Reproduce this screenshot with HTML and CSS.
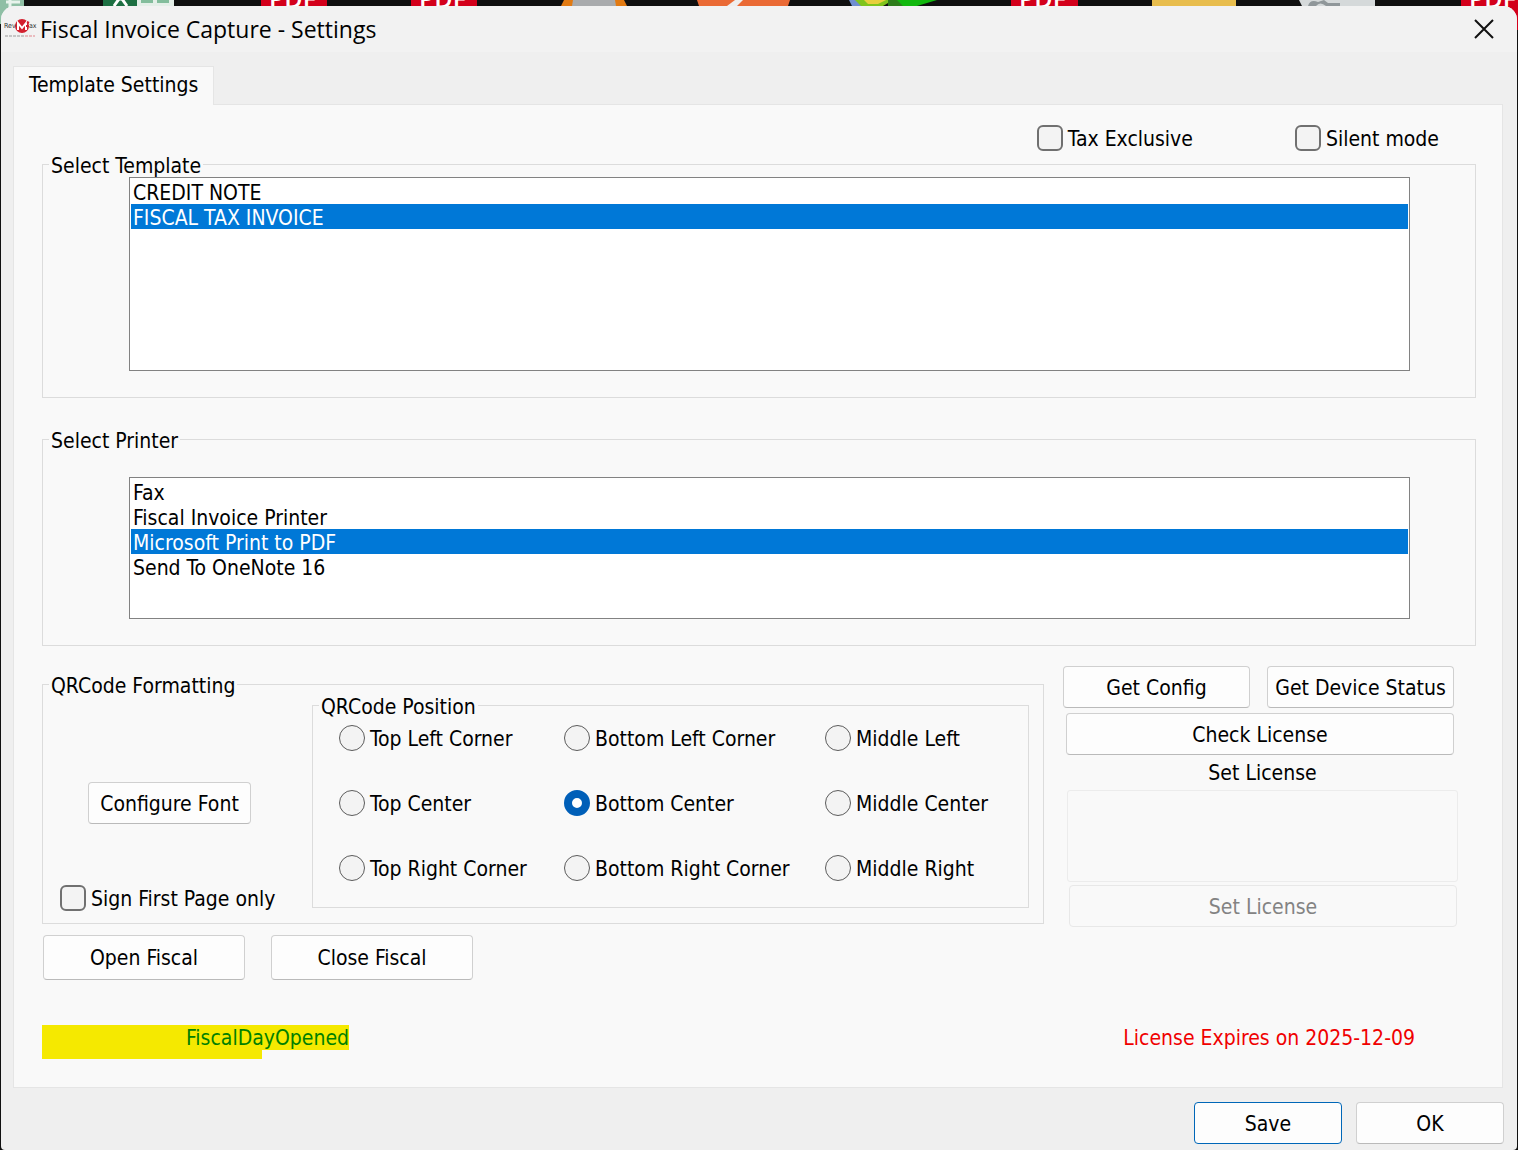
FILE: index.html
```html
<!DOCTYPE html>
<html lang="en">
  <head>
    <meta charset="utf-8">
    <title>Fiscal Invoice Capture - Settings</title>
    <link rel="stylesheet" href="styles.css">
  </head>
  <body>
    <!-- desktop icons peeking out behind the window -->
    <svg class="desktop" width="1518" height="36" aria-hidden="true">
      <rect x="0" width="24" height="24" fill="#8fbfa5"/>
      <path d="M6 2h14M10 0v8" stroke="#e8f3ec" stroke-width="3"/>
      <rect x="103" width="34" height="24" fill="#1d6f42"/>
      <path d="M114 6l5-7h3l5 7" fill="none" stroke="#fff" stroke-width="3"/>
      <rect x="137" width="37" height="24" fill="#e4efe8"/>
      <path d="M141 0h12v3h-12zM157 0h12v3h-12z" fill="#83bd9c"/>
      <g fill="#d3001b">
        <rect x="261" width="66" height="24"/>
        <rect x="411" width="66" height="24"/>
        <rect x="1011" width="67" height="24"/>
        <rect x="1461" width="57" height="30"/>
      </g>
      <g class="pdf">
        <text x="269" y="8">PDF</text>
        <text x="419" y="8">PDF</text>
        <text x="1019" y="8">PDF</text>
        <text x="1469" y="8">PDF</text>
      </g>
      <path d="M561 6l3-6h60l3 6z" fill="#e27a12"/>
      <path d="M572 6l1-6h42l1 6z" fill="#a9abad"/>
      <path d="M697 0h93l-2 6h-89z" fill="#ea6a35"/>
      <path d="M727 6l8-6h8l-6 6z" fill="#eee"/>
      <path d="M849 0h20v6h-17z" fill="#6f8ed0"/>
      <path d="M855 0h38l-10 6h-22z" fill="#7fc41c"/>
      <path d="M864 0h22l-8 4h-10z" fill="#e8cf3c"/>
      <path d="M888 0h10l8 6h-18z" fill="#2e7d1b"/>
      <path d="M897 0h40l-20 6h-14z" fill="#12b80e"/>
      <rect x="1152" width="84" height="6" fill="#e8bd4d"/>
      <path d="M1299 0h76v6h-73z" fill="#d5d9da"/>
      <path d="M1308 6q2-7 10-4l6-2 4 3 12 0v3h-14q-6-5-10 0z" fill="#90979a"/>
    </svg>

    <main class="window">
      <header class="titlebar">
        <svg class="logo" viewBox="0 0 34 22" aria-hidden="true">
          <circle cx="18" cy="8" r="7" fill="#d3202f"/>
          <path d="M14 12V5l4 5 4-5v7" fill="none" stroke="#fff" stroke-width="2"/>
          <path d="M23 4l2 1M22 8h3" stroke="#d3202f" stroke-width="2"/>
          <text x="0" y="10" class="logo-text">Rev</text>
          <text x="25" y="10" class="logo-text">ax</text>
          <path d="M1 18h19" stroke="#9a9a9a" stroke-dasharray="3 1"/>
          <path d="M21 18h10" stroke="#e2858c" stroke-dasharray="3 1"/>
        </svg>
        <h1 class="title">Fiscal Invoice Capture - Settings</h1>
        <button class="close" type="button" aria-label="Close">
          <svg width="20" height="20" viewBox="0 0 20 20"><path d="M1 1l18 18M19 1L1 19" stroke="#111" stroke-width="2"/></svg>
        </button>
      </header>

      <nav class="tabs">
        <button class="tab" type="button">Template Settings</button>
      </nav>

      <form class="panel" id="settings">
        <div class="modes">
          <label class="check"><input type="checkbox"><span>Tax Exclusive</span></label>
          <label class="check"><input type="checkbox"><span>Silent mode</span></label>
        </div>

        <fieldset class="group template">
          <legend>Select Template</legend>
          <div class="list-area">
            <select class="list" size="7" aria-label="Select Template">
              <option>CREDIT NOTE</option>
              <option selected>FISCAL TAX INVOICE</option>
            </select>
          </div>
        </fieldset>

        <fieldset class="group printer">
          <legend>Select Printer</legend>
          <div class="list-area">
            <select class="list" size="5" aria-label="Select Printer">
              <option>Fax</option>
              <option>Fiscal Invoice Printer</option>
              <option selected>Microsoft Print to PDF</option>
              <option>Send To OneNote 16</option>
            </select>
          </div>
        </fieldset>

        <div class="lower">
          <div class="qr-column">
            <fieldset class="group qr">
              <legend>QRCode Formatting</legend>
              <div class="qr-body">
                <div class="qr-side">
                  <button class="btn configure" type="button">Configure Font</button>
                  <label class="check"><input type="checkbox"><span>Sign First Page only</span></label>
                </div>
                <fieldset class="group position">
                  <legend>QRCode Position</legend>
                  <div class="radios">
                    <label class="radio"><input type="radio" name="pos"><span>Top Left Corner</span></label>
                    <label class="radio"><input type="radio" name="pos"><span>Bottom Left Corner</span></label>
                    <label class="radio"><input type="radio" name="pos"><span>Middle Left</span></label>
                    <label class="radio"><input type="radio" name="pos"><span>Top Center</span></label>
                    <label class="radio"><input type="radio" name="pos" checked><span>Bottom Center</span></label>
                    <label class="radio"><input type="radio" name="pos"><span>Middle Center</span></label>
                    <label class="radio"><input type="radio" name="pos"><span>Top Right Corner</span></label>
                    <label class="radio"><input type="radio" name="pos"><span>Bottom Right Corner</span></label>
                    <label class="radio"><input type="radio" name="pos"><span>Middle Right</span></label>
                  </div>
                </fieldset>
              </div>
            </fieldset>
            <div class="fiscal">
              <button class="btn" type="button">Open Fiscal</button>
              <button class="btn" type="button">Close Fiscal</button>
            </div>
          </div>

          <div class="license">
            <div class="device">
              <button class="btn" type="button">Get Config</button>
              <button class="btn" type="button">Get Device Status</button>
            </div>
            <button class="btn check-license" type="button">Check License</button>
            <label class="license-label" for="license">Set License</label>
            <textarea class="license-key" id="license" disabled></textarea>
            <button class="btn set-license" type="button" disabled>Set License</button>
          </div>
        </div>

        <div class="status">
          <div class="day-bar"></div>
          <span class="day">FiscalDayOpened</span>
          <span class="expires">License Expires on 2025-12-09</span>
        </div>
      </form>

      <footer class="actions">
        <button class="btn default" type="submit" form="settings">Save</button>
        <button class="btn" type="button">OK</button>
      </footer>
    </main>
  </body>
</html>
```
FILE: styles.css
```css
* {
  box-sizing: border-box;
}

body {
  margin: 0;
  padding: 6px 1px 0;
  min-height: 100vh;
  display: flex;
  background: #101010;
  color: #000;
  font-family: "DejaVu Sans Condensed", "Noto Sans", sans-serif;
  font-size: 21px;
  line-height: 25px;
}

button,
input,
select,
textarea {
  font: inherit;
  color: inherit;
  margin: 0;
}

.desktop {
  position: absolute;
  top: 0;
  left: 0;
  max-width: 100%;
}

.pdf {
  fill: #fff;
  font-family: "Open Sans", sans-serif;
  font-size: 25px;
  font-weight: 600;
}

.window {
  position: relative;
  flex: 1;
  min-width: 0;
  display: flex;
  flex-direction: column;
  background: #efefef;
  border-radius: 14px 14px 4px 4px;
  overflow: hidden;
}

.titlebar {
  display: flex;
  align-items: center;
  height: 46px;
  padding: 0 23px 0 3px;
  background: #f2f2f2;
}

.logo {
  width: 34px;
  height: 22px;
}

.logo-text {
  font-size: 7px;
  fill: #333;
}

.title {
  flex: 1;
  margin: 0 0 0 2px;
  font-family: "Open Sans", sans-serif;
  font-size: 23px;
  font-weight: normal;
}

.close {
  display: flex;
  padding: 0;
  border: 0;
  background: none;
}

.tabs {
  display: flex;
  padding: 14px 12px 0;
}

.tab {
  height: 39px;
  padding: 0 15px 2px;
  margin-bottom: -1px;
  border: 1px solid #e5e5e5;
  border-bottom: 0;
  background: #f9f9f9;
  z-index: 1;
}

.panel {
  flex: 1;
  margin: 0 14px 0 12px;
  padding: 19px 26px 28px 28px;
  border: 1px solid #e5e5e5;
  background: #f9f9f9;
}

.modes {
  display: flex;
  justify-content: flex-end;
  gap: 102px;
  height: 28px;
  padding-right: 37px;
}

.check,
.radio {
  display: flex;
  align-items: center;
  gap: 5px;
  height: 28px;
  white-space: nowrap;
}

.check span,
.radio span {
  padding-top: 2px;
}

.check input,
.radio input {
  appearance: none;
  width: 26px;
  height: 26px;
  border: 2px solid #707070;
  border-radius: 6px;
  background: #f3f3f3;
}

.radio input {
  border-width: 1px;
  border-color: #5c5c5c;
  border-radius: 50%;
}

.radio input:checked {
  border: 8px solid #005fb8;
  background: #fff;
}

.group {
  min-width: 0;
  margin: 0;
  padding: 0;
  border: 1px solid #dcdcdc;
}

.group > legend {
  margin-left: 6px;
  padding: 3px 2px 0;
  line-height: 22px;
}

.list-area {
  padding: 0 65px 26px 86px;
}

.printer {
  margin-top: 29px;
}

.printer .list-area {
  padding-top: 25px;
}

.list {
  display: block;
  width: 100%;
  height: 194px;
  padding: 1px;
  border: 1px solid #828282;
  border-radius: 0;
  background: #fff;
  outline: 0;
  overflow: hidden;
}

.printer .list {
  height: 142px;
}

.list option {
  height: 25px;
  min-height: 0;
  padding: 2px 2px 0;
  line-height: 23px;
}

.list option:checked {
  background: #0078d7 linear-gradient(#0078d7, #0078d7);
  color: #fff;
  -webkit-text-fill-color: #fff;
}

.lower {
  display: flex;
  gap: 19px;
  margin-top: 20px;
  padding-right: 18px;
}

.qr-column {
  flex: 1;
  min-width: 0;
}

.qr {
  margin-top: 6px;
}

.qr-body {
  display: flex;
  margin-top: -4px;
  padding: 0 14px 15px 0;
}

.qr-side {
  display: flex;
  flex-direction: column;
  align-items: flex-start;
  gap: 60px;
  width: 269px;
  margin-bottom: -10px;
  padding: 89px 0 0 17px;
}

.btn {
  height: 42px;
  padding: 2px 0 0;
  border: 1px solid #d0d0d0;
  border-bottom-color: #bababa;
  border-radius: 4px;
  background: #fdfdfd;
  white-space: nowrap;
}

.configure {
  width: 163px;
  margin-left: 28px;
}

.position {
  flex: 1;
}

.radios {
  display: grid;
  grid-template-columns: 225px 261px auto;
  row-gap: 39px;
  padding: 7px 0 26px 26px;
}

.radio {
  height: 26px;
}

.fiscal {
  display: flex;
  gap: 26px;
  margin: 11px 0 0 1px;
}

.fiscal .btn {
  width: 202px;
  height: 45px;
}

.license {
  display: flex;
  flex-direction: column;
  width: 395px;
}

.device {
  display: grid;
  grid-template-columns: 1fr 1fr;
  gap: 17px;
  margin-right: 4px;
}

.check-license {
  margin: 5px 4px 0 3px;
}

.license-label {
  margin: 6px 0 4px 4px;
  text-align: center;
}

.license-key {
  height: 92px;
  margin-left: 4px;
  border: 1px solid #ececec;
  border-radius: 3px;
  background: #f9f9f9;
  resize: none;
}

.set-license {
  margin: 3px 1px 0 6px;
}

.btn:disabled {
  border-color: #e8e8e8;
  background: #f9f9f9;
  color: #838383;
}

.status {
  display: flex;
  align-items: flex-start;
  margin-top: 45px;
}

.day-bar {
  width: 220px;
  height: 34px;
  background: #f5e900;
}

/* the label runs over the end of the bar */
.day {
  margin-left: -76px;
  padding-top: 2px;
  line-height: 23px;
  background: #f5e900;
  color: #008000;
}

.expires {
  margin: 0 61px 0 auto;
  padding-top: 2px;
  line-height: 23px;
  color: #f00000;
}

.actions {
  display: flex;
  justify-content: flex-end;
  gap: 14px;
  padding: 14px 13px 6px;
}

.actions .btn {
  width: 148px;
}

.actions .default {
  border-color: #0067b8;
}
```
